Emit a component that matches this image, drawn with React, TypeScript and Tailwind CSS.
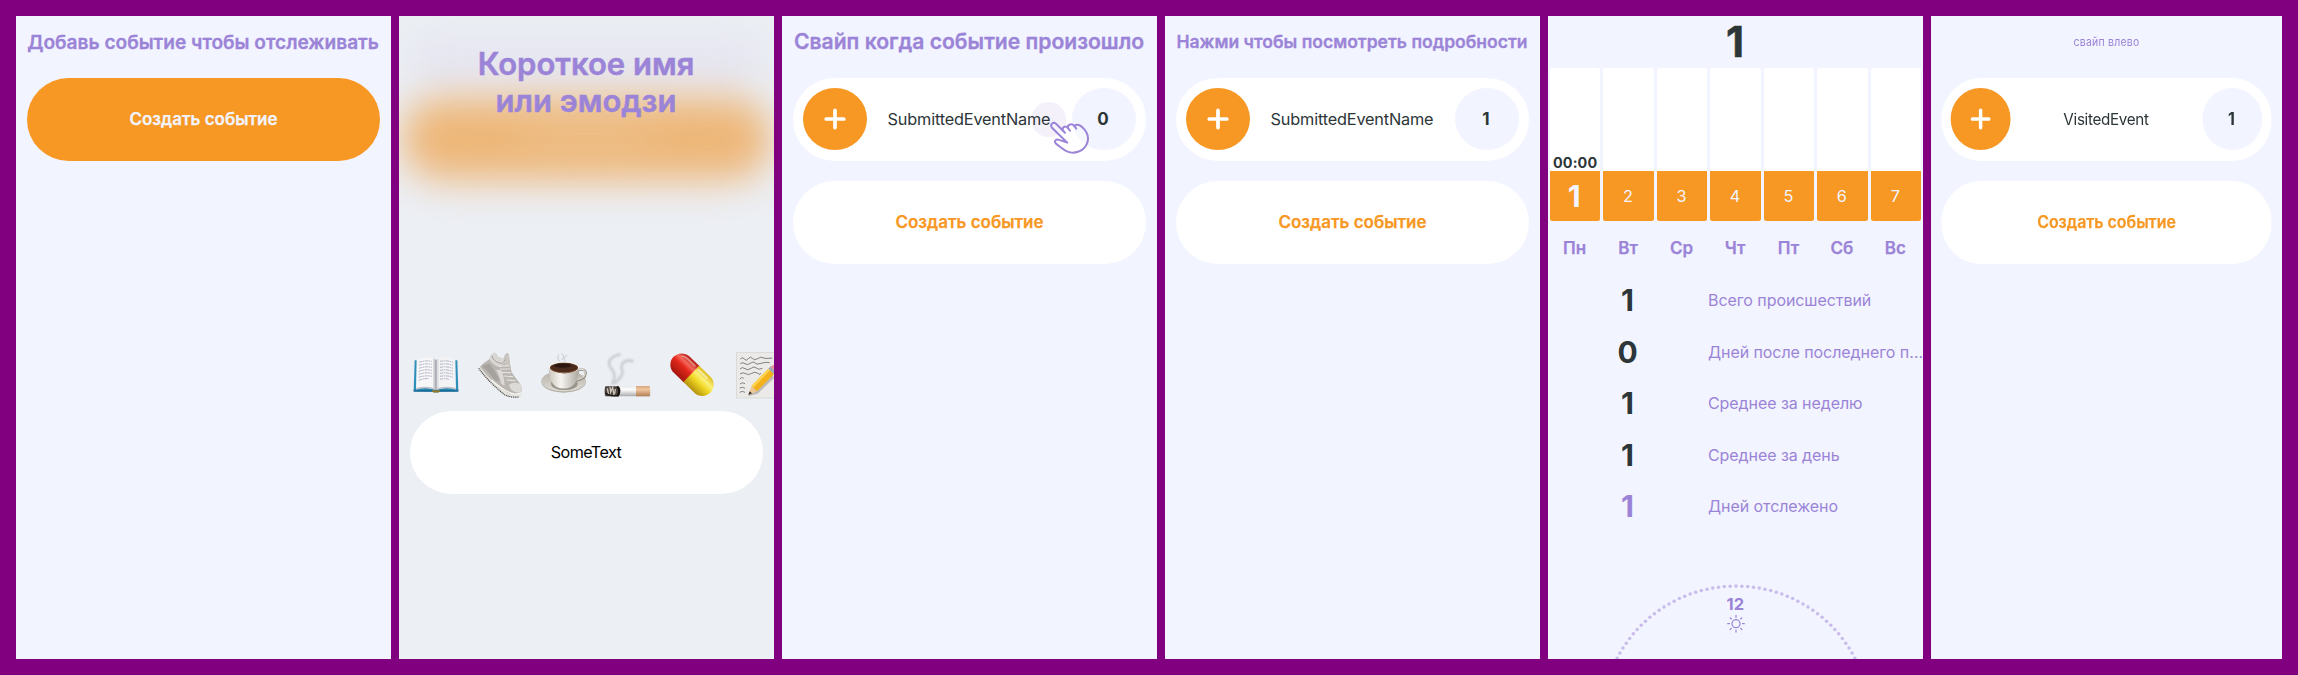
import type { ReactNode } from "react";

const DAYS = ["Пн", "Вт", "Ср", "Чт", "Пт", "Сб", "Вс"];

const STATS = [
  { value: "1", label: "Всего происшествий", accent: false },
  { value: "0", label: "Дней после последнего п…", accent: false },
  { value: "1", label: "Среднее за неделю", accent: false },
  { value: "1", label: "Среднее за день", accent: false },
  { value: "1", label: "Дней отслежено", accent: true },
];

function Screen({ children }: { children?: ReactNode }) {
  return (
    <section className="relative h-[643px] w-[375px] shrink-0 overflow-hidden bg-[#f2f4ff]">
      {children}
    </section>
  );
}

function Heading({ children, size }: { children: ReactNode; size: string }) {
  return (
    <h2
      className={`flex h-[52px] items-center justify-center whitespace-nowrap pr-px font-semibold text-[#9b84d7] [-webkit-text-stroke:0.3px_#9b84d7] ${size}`}
    >
      {children}
    </h2>
  );
}

function CreateButton({ filled = false }: { filled?: boolean }) {
  return (
    <button
      className={`flex h-[82.7px] w-full items-center justify-center rounded-[42px] text-[17px] font-semibold [-webkit-text-stroke:0.25px_currentColor] ${
        filled ? "bg-[#f79824] text-[#f2f4ff]" : "bg-white text-[#f79824]"
      }`}
    >
      Создать событие
    </button>
  );
}

function EventRow({ name, count, tracking }: { name: string; count: string; tracking: string }) {
  return (
    <div className="flex h-[82.7px] items-center justify-between rounded-[42px] bg-white px-[10.8px] text-[#2c3638]">
      <div className="flex h-[61.8px] w-[64px] items-center justify-center rounded-[50%] bg-[#f79824]">
        <svg viewBox="0 0 22 22" className="h-[22px] w-[22px]">
          <path d="M2.2 11H19.8M11 2.4V19.6" stroke="#fff" strokeWidth="3.7" strokeLinecap="round" />
        </svg>
      </div>
      <span className={`relative z-10 pr-px text-[16.3px] ${tracking}`}>{name}</span>
      <div className="flex h-[61.8px] w-[64px] items-center justify-center rounded-[50%] bg-[#f2f4ff] pr-px text-[17px] font-bold">
        {count}
      </div>
    </div>
  );
}

function SwipeHint() {
  return (
    <>
      <div className="absolute left-[249px] top-[86px] h-[35px] w-[35.3px] rounded-full bg-[#f4f1fb]" />
      <svg
        viewBox="85 90 130 105"
        className="absolute left-[266.3px] top-[104px] z-20 h-[35px] w-[43.3px]"
        fill="none"
        stroke="#9b84d7"
        strokeWidth="6"
        strokeLinecap="round"
        strokeLinejoin="round"
      >
        <path
          d="M143 158L97 113C90 104 100 94 109 101L131 123C125 113 136 105 144 113C145 102 157 100 164 108C172 101 183 105 188 112C204 127 209 146 201 163C190 186 162 193 142 184C132 180 122 171 109 161C102 154 109 147 116 149Z"
          fill="#fff"
          fillOpacity="0.35"
        />
        <path d="M131 123L136 128M144 113L151 122M164 108L170 116" />
      </svg>
    </>
  );
}

function BookEmoji() {
  return (
    <svg viewBox="0 0 144 144" className="h-12 w-12 shrink-0">
      <path d="M8 28H136L139 121L84 122Q72 126 60 122L5 121Z" fill="#2e8fbb" />
      <path d="M5 116H139V122L84 122Q72 126 60 122L5 122Z" fill="#1c6e98" />
      <path d="M60 118H84V122Q72 127 60 122Z" fill="#8b7a2e" />
      <path d="M14 26Q45 13 72 26V116Q45 106 12 115Z" fill="#f7f7f9" />
      <path d="M130 26Q99 13 72 26V116Q99 106 132 115Z" fill="#f3f3f6" />
      <path d="M12 111Q45 102 72 113Q99 102 132 111V116Q99 107 72 118Q45 107 12 116Z" fill="#bfc2c8" />
      <path d="M64 23Q70 24 72 28V116Q70 112 64 110Z" fill="#c9cbd1" />
      <path d="M80 23Q74 24 72 28V116Q74 112 80 110Z" fill="#dcdde2" />
      <path d="M72 26V117" stroke="#85878d" strokeWidth="2.5" />
      <path
        d="M21 34Q40 27 60 31M21 43Q40 36 60 40M21 52Q40 45 60 49M20 61Q40 54 60 58M20 70Q40 63 60 67M20 79Q40 72 60 76M20 88Q40 81 50 83M84 31Q104 27 123 34M84 40Q104 36 123 43M84 49Q104 45 123 52M84 58Q104 54 123 61M84 67Q104 63 123 70M84 76Q104 72 123 79M84 85Q98 81 112 85"
        stroke="#a4a6b8"
        strokeWidth="2.6"
        strokeDasharray="9 2 5 2"
        fill="none"
      />
    </svg>
  );
}

function ShoeEmoji() {
  return (
    <svg viewBox="0 0 144 144" className="h-12 w-12 shrink-0">
      <path d="M9 50L16 46L60 95Q85 115 137 128Q139 136 130 137Q98 142 78 127Q62 112 50 101Q26 78 9 59Z" fill="#e6e3df" />
      <path d="M8 52Q30 81 52 102Q72 120 84 130Q104 141 129 138" fill="none" stroke="#494744" strokeWidth="4" strokeDasharray="3 2.5" />
      <path d="M12 47Q22 36 40 25Q43 12 53 6Q59 4 62 12Q66 22 84 22Q86 10 92 6Q98 6 99 16Q102 42 107 64Q120 84 132 98Q139 108 137 124Q118 134 96 126Q72 112 50 91Q30 70 12 47Z" fill="#b9b5b1" />
      <path d="M40 25Q43 12 53 6Q59 4 62 12Q66 22 84 22L90 31L72 49Q52 45 40 25Z" fill="#d9d6d3" />
      <path d="M84 22Q86 10 92 6Q98 6 99 16Q100 34 104 52L88 41Z" fill="#c9c6c2" />
      <path d="M98 102Q112 91 131 98Q139 108 137 124Q120 128 107 118Z" fill="#dcdad7" />
      <path d="M18 44Q38 61 56 88L70 91Q62 62 40 38Z" fill="#a5a19d" />
      <path d="M60 56Q70 72 76 98L86 105Q84 76 76 58Z" fill="#dddad7" />
      <path d="M70 46L96 44M73 54L101 54M78 64L104 65M84 75L110 77M92 87L117 89" stroke="#e6e4e1" strokeWidth="3.4" strokeLinecap="round" />
      <path d="M48 14Q52 34 78 38L88 26" stroke="#8f8b87" strokeWidth="2" fill="none" />
      <path d="M46 86Q76 114 104 126Q122 132 137 125" stroke="#f4f3f1" strokeWidth="4" fill="none" />
    </svg>
  );
}

function CoffeeEmoji() {
  return (
    <svg viewBox="0 0 144 144" className="h-12 w-12 shrink-0">
      <defs>
        <linearGradient id="cup" x1="0" x2="1">
          <stop offset="0" stopColor="#c9c5bc" />
          <stop offset="0.4" stopColor="#f7f5f0" />
          <stop offset="1" stopColor="#a9a59c" />
        </linearGradient>
        <linearGradient id="saucer" x1="0" x2="0" y1="0" y2="1">
          <stop offset="0" stopColor="#b4b0a8" />
          <stop offset="1" stopColor="#dedbd4" />
        </linearGradient>
      </defs>
      <path d="M58 30Q50 22 56 12M66 26Q76 18 66 8M75 30Q68 22 80 13" stroke="#c7c9ce" strokeWidth="4" fill="none" strokeLinecap="round" opacity="0.7" />
      <ellipse cx="71" cy="93" rx="67" ry="32" fill="#b5b1a9" />
      <ellipse cx="71" cy="90" rx="67" ry="31" fill="url(#saucer)" />
      <ellipse cx="73" cy="98" rx="40" ry="19" fill="#98948b" />
      <path d="M112 58Q137 51 137 67Q136 85 105 89" fill="none" stroke="#8e8a82" strokeWidth="7" />
      <path d="M112 57Q136 50 136 66Q135 83 105 87" fill="none" stroke="#dedbd3" strokeWidth="4" />
      <path d="M26 50Q26 91 48 107Q71 118 94 107Q117 92 118 50Z" fill="url(#cup)" />
      <ellipse cx="72" cy="49" rx="46" ry="18" fill="#f1efea" />
      <ellipse cx="72" cy="50" rx="42" ry="15" fill="#4a2b1c" />
      <path d="M31 52Q45 64 72 65Q100 64 113 52Q108 61 96 64Q72 71 46 63Q34 60 31 52Z" fill="#7b4c2e" />
      <ellipse cx="68" cy="44" rx="26" ry="6" fill="#2a1711" />
    </svg>
  );
}

function CigaretteEmoji() {
  return (
    <svg viewBox="0 0 144 144" className="h-12 w-12 shrink-0">
      <defs>
        <linearGradient id="paper" x1="0" x2="0" y1="0" y2="1">
          <stop offset="0" stopColor="#e8e8ea" />
          <stop offset="0.35" stopColor="#ffffff" />
          <stop offset="1" stopColor="#a9a9ad" />
        </linearGradient>
        <linearGradient id="tip" x1="0" x2="0" y1="0" y2="1">
          <stop offset="0" stopColor="#d9a67d" />
          <stop offset="0.35" stopColor="#f0c6a0" />
          <stop offset="1" stopColor="#b17c54" />
        </linearGradient>
        <filter id="smoke" x="-20%" y="-20%" width="140%" height="140%">
          <feGaussianBlur stdDeviation="3" />
        </filter>
      </defs>
      <g fill="none" stroke="#c6c9ce" strokeLinecap="round" filter="url(#smoke)">
        <path d="M47 10C8 20 10 40 26 58C36 74 32 86 24 98" strokeWidth="7" />
        <path d="M86 30C62 24 48 38 54 56C60 72 44 86 32 98" strokeWidth="7" />
      </g>
      <rect x="2" y="105" width="137" height="31" rx="3" fill="url(#paper)" />
      <path d="M96 105H137Q141 120 137 136H96Z" fill="url(#tip)" />
      <path d="M4 106H42Q52 112 48 122Q50 132 40 136H5Q-1 120 4 106Z" fill="#4b433d" />
      <path d="M10 112L14 132M18 108L20 124L26 110L30 132M34 114L32 128" stroke="#cfc8bf" strokeWidth="4" fill="none" />
      <path d="M40 106Q52 120 40 136" stroke="#15110f" strokeWidth="6" fill="none" />
      <path d="M4 126Q18 137 40 134" stroke="#1b1614" strokeWidth="4" fill="none" />
    </svg>
  );
}

function PillEmoji() {
  return (
    <svg viewBox="0 0 144 144" className="h-12 w-12 shrink-0">
      <defs>
        <linearGradient id="red" x1="0" x2="0" y1="0" y2="1">
          <stop offset="0" stopColor="#b81b12" />
          <stop offset="0.3" stopColor="#f4685a" />
          <stop offset="0.5" stopColor="#e4291c" />
          <stop offset="1" stopColor="#a3160e" />
        </linearGradient>
        <linearGradient id="yellow" x1="0" x2="0" y1="0" y2="1">
          <stop offset="0" stopColor="#ddbd1a" />
          <stop offset="0.3" stopColor="#fbf07a" />
          <stop offset="0.55" stopColor="#f0d824" />
          <stop offset="1" stopColor="#b5920d" />
        </linearGradient>
      </defs>
      <g transform="rotate(44 72 71)">
        <path d="M72 37H29A34 34 0 0 0 29 105H72Z" fill="url(#red)" />
        <path d="M69 37H115A34 34 0 0 1 115 105H69Z" fill="url(#yellow)" />
        <path d="M12 52Q18 46 30 46H60" stroke="#fff" strokeOpacity="0.4" strokeWidth="5" fill="none" strokeLinecap="round" />
        <path d="M76 47H112" stroke="#fff" strokeOpacity="0.5" strokeWidth="5" strokeLinecap="round" />
      </g>
    </svg>
  );
}

function MemoEmoji() {
  return (
    <svg viewBox="0 0 144 144" className="ml-[2.7px] h-12 w-12 shrink-0">
      <rect x="4" y="5" width="136" height="136" fill="#ebeae8" stroke="#d3d2cf" strokeWidth="2" />
      <path
        d="M16 24Q22 16 28 24T40 23T52 22T68 23T84 20T112 21M16 38Q24 32 30 38T46 37T60 36T78 37T104 35M15 54Q22 46 30 53T48 52T64 51T82 52M15 69Q24 62 32 68T50 67T68 67T78 66M14 84Q20 76 26 82M15 99Q22 92 30 98M14 111Q22 106 30 112M14 124Q22 118 30 124"
        stroke="#5a595b"
        strokeWidth="2.2"
        fill="none"
      />
      <path d="M40 136L50 108L98 60L118 80L68 128Z" fill="#8f8c88" opacity="0.5" />
      <path d="M40 132L50 104L66 121Z" fill="#ecc793" />
      <path d="M40 132L44 121L51 127Z" fill="#322a28" />
      <path d="M50 104L100 53L117 70L66 121Z" fill="#f3b21c" />
      <path d="M50 104L100 53L105 58L55 110Z" fill="#ffd450" />
      <path d="M100 53L107 46L124 63L117 70Z" fill="#9fa9b2" />
      <path d="M107 46Q117 40 123 46Q131 54 124 63Z" fill="#ee8f92" />
    </svg>
  );
}

function Clock() {
  const dots = Array.from({ length: 144 }, (_, i) => {
    const a = (i * 2.5 * Math.PI) / 180;
    return { x: 136 + 134 * Math.sin(a), y: 136 - 134 * Math.cos(a) };
  });
  return (
    <div className="relative mx-auto h-[272px] w-[272px]">
      <svg viewBox="0 0 272 272" className="h-[272px] w-[272px]">
        {dots.map((d, i) => (
          <circle key={i} cx={d.x} cy={d.y} r="1.75" fill="#c8bdea" />
        ))}
        <g transform="translate(136 39.7)" stroke="#9b84d7" strokeWidth="1.25" strokeLinecap="round" fill="none">
          <circle r="4" />
          <path d="M0 -8.3V-6.5M0 8.3V6.5M-8.3 0H-6.5M8.3 0H6.5M-5.8 -5.8L-4.7 -4.7M5.8 5.8L4.7 4.7M-5.8 5.8L-4.7 4.7M5.8 -5.8L4.7 -4.7" />
        </g>
      </svg>
      <span className="absolute inset-x-0 top-[10px] text-center text-[16.5px] font-bold leading-5 tracking-[0.3px] text-[#9b84d7]">
        12
      </span>
    </div>
  );
}

export default function App() {
  return (
    <main className="flex h-[675px] w-[2298px] gap-2 overflow-hidden bg-[#800080] p-4 font-['Inter',sans-serif]">
      <Screen>
        <Heading size="text-[19.1px]">Добавь событие чтобы отслеживать</Heading>
        <div className="px-[10.7px] pt-[10px]">
          <CreateButton filled />
        </div>
      </Screen>

      <section className="relative h-[643px] w-[375px] shrink-0 overflow-hidden bg-[#eceff4]">
        <div className="absolute left-[14px] right-[14px] top-[24px] h-[46px] bg-[#e5e4f0] blur-[18px]" />
        <div className="absolute left-[2px] top-[82px] h-[82px] w-[371px] rounded-[41px] bg-[#eeb06a] opacity-90 blur-[19px]" />
        <div className="absolute left-[120px] top-[108px] h-[28px] w-[135px] rounded-full bg-[#edc799] opacity-60 blur-[20px]" />
        <div className="relative flex h-full flex-col pt-[30.2px]">
          <h1 className="pr-px text-center text-[31px] font-semibold leading-[36.4px] text-[#9b84d7] [-webkit-text-stroke:0.5px_#9b84d7]">
            Короткое имя
            <br />
            или эмодзи
          </h1>
          <div className="mt-[231.7px] flex h-12 gap-4 pl-[13.2px]">
            <BookEmoji />
            <ShoeEmoji />
            <CoffeeEmoji />
            <CigaretteEmoji />
            <PillEmoji />
            <MemoEmoji />
          </div>
          <div className="mx-[10.9px] mt-[12.3px] flex h-[82.7px] items-center justify-center rounded-[42px] bg-white pr-px text-[16.2px] tracking-[-0.6px] text-black">
            SomeText
          </div>
        </div>
      </section>

      <Screen>
        <Heading size="text-[21.1px]">Свайп когда событие произошло</Heading>
        <div className="flex flex-col gap-[20.3px] px-[10.7px] pt-[10px]">
          <EventRow name="SubmittedEventName" count="0" tracking="tracking-[-0.18px]" />
          <CreateButton />
        </div>
        <SwipeHint />
      </Screen>

      <Screen>
        <Heading size="text-[17.55px]">Нажми чтобы посмотреть подробности</Heading>
        <div className="flex flex-col gap-[20.3px] px-[10.7px] pt-[10px]">
          <EventRow name="SubmittedEventName" count="1" tracking="tracking-[-0.18px]" />
          <CreateButton />
        </div>
      </Screen>

      <Screen>
        <div className="flex h-[52px] items-center justify-center pr-px text-[42px] font-bold leading-none text-[#2c3638] [-webkit-text-stroke:0.5px_#2c3638]">
          1
        </div>
        <div className="grid grid-cols-7 gap-x-[3.2px] px-[2px]">
          {DAYS.map((day, i) => (
            <div key={day} className="flex flex-col items-center">
              <div className="flex h-[102.6px] w-full items-end justify-center rounded-t-[2.5px] bg-white text-[14.4px] font-bold leading-4 tracking-[0.1px] text-[#2c3638]">
                {i === 0 ? "00:00" : ""}
              </div>
              <div className="flex h-[50.7px] w-full items-center justify-center rounded-b-[2.5px] bg-[#f79824] pr-px text-[16.3px] text-[#f2f4ff]">
                {i === 0 ? <span className="pr-px text-[30px] font-bold leading-none">1</span> : i + 1}
              </div>
              <div className="mt-[15px] pr-px text-[17px] font-semibold leading-6 text-[#9b84d7] [-webkit-text-stroke:0.25px_#9b84d7]">
                {day}
              </div>
            </div>
          ))}
        </div>
        <div className="mt-[14px] flex flex-col">
          {STATS.map((s) => (
            <div key={s.label} className="flex h-[51.55px] items-center text-[#9b84d7]">
              <div
                className={`w-[160px] shrink-0 pr-px text-center text-[30px] font-bold leading-none ${
                  s.accent ? "" : "text-[#2c3638]"
                }`}
              >
                {s.value}
              </div>
              <div className="whitespace-nowrap text-[16px] tracking-[-0.07px]">{s.label}</div>
            </div>
          ))}
        </div>
        <div className="mt-[51.5px]">
          <Clock />
        </div>
      </Screen>

      <div className="h-[643px] w-[351px] shrink-0 overflow-hidden">
        <div className="w-[375px] origin-left scale-x-[0.936]">
          <Screen>
            <h2 className="flex h-[52px] items-center justify-center text-[11.2px] tracking-[0.25px] text-[#9b84d7]">
              свайп влево
            </h2>
            <div className="flex flex-col gap-[20.3px] px-[10.7px] pt-[10px]">
              <EventRow name="VisitedEvent" count="1" tracking="tracking-[-0.35px]" />
              <CreateButton />
            </div>
          </Screen>
        </div>
      </div>
    </main>
  );
}
